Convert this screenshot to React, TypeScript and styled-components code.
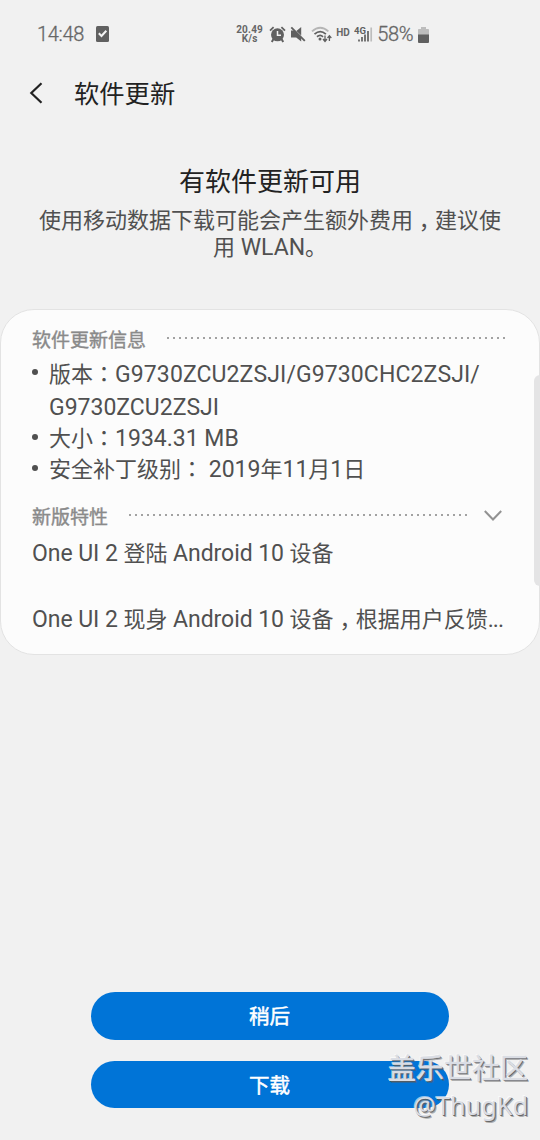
import React from 'react';
import styled, { createGlobalStyle } from 'styled-components';

const GlobalStyle = createGlobalStyle`
  * { box-sizing: border-box; }
  body {
    margin: 0;
    background: #f1f1f1;
    font-family: Roboto, 'Noto Sans CJK SC', sans-serif;
    color: #505050;
  }
`;

const Screen = styled.div`
  position: relative;
  display: flex;
  flex-direction: column;
  width: 540px;
  height: 1140px;
  overflow: hidden;
  background: #f1f1f1;
`;

const StatusBar = styled.div`
  display: flex;
  justify-content: space-between;
  align-items: center;
  height: 68px;
  padding: 0 111px 0 37px;
  color: #666;
  flex: none;
`;

const StatusGroup = styled.div<{ $gap: number }>`
  display: flex;
  align-items: center;
  gap: ${(p) => p.$gap}px;
`;

const StatusText = styled.span`
  font-size: 20px;
  font-weight: 300;
  line-height: 24px;
  letter-spacing: -0.3px;
  -webkit-text-stroke: 0.3px #666;
`;

const NetSpeed = styled.span`
  display: flex;
  flex-direction: column;
  align-items: center;
  margin-right: 1px;
  font-size: 10px;
  font-weight: 700;
  line-height: 9.5px;
  letter-spacing: 0.2px;
`;

const HdLabel = styled.span`
  font-size: 10px;
  font-weight: 700;
  line-height: 12px;
  margin: -2px -1px 0 -0.5px;
`;

const Header = styled.header`
  display: flex;
  align-items: center;
  height: 50px;
  padding-left: 28px;
  gap: 29px;
  color: #222;
  flex: none;
`;

const HeaderTitle = styled.h1`
  margin: 0;
  padding-top: 4px;
  font-size: 25.3px;
  font-weight: 400;
  line-height: 38px;
`;

const Intro = styled.section`
  padding: 45px 30px 0;
  height: 191px;
  text-align: center;
  flex: none;
`;

const IntroTitle = styled.h2`
  margin: 0;
  font-size: 26px;
  font-weight: 400;
  line-height: 38px;
  color: #222;
`;

const IntroText = styled.p`
  margin: 6px 0 0;
  font-size: 22px;
  line-height: 27px;
  white-space: nowrap;
`;

const Latin = styled.span<{ $spacing?: number }>`
  font-size: 23px;
  line-height: 0;
  letter-spacing: ${(p) => p.$spacing ?? 0}px;
`;

const Comma = styled.span`
  font-family: 'Noto Sans CJK TC', sans-serif;
  line-height: 0;
  vertical-align: -7px;
`;

const Colon = styled.span`
  font-family: 'Noto Sans CJK TC', sans-serif;
  line-height: 0;
`;

const Card = styled.section`
  height: 346px;
  padding: 15px 32px 0 31px;
  border: 1px solid #e3e3e3;
  border-radius: 34px;
  background: #fcfcfc;
  flex: none;
`;

const SectionHead = styled.div<{ $gap: number }>`
  display: flex;
  align-items: center;
  gap: ${(p) => p.$gap}px;
  height: 28px;
  color: #8a8a8a;
`;

const SectionTitle = styled.h3`
  margin: 0;
  padding-top: 3px;
  font-size: 19px;
  font-weight: 400;
  line-height: 28px;
  -webkit-text-stroke: 0.4px #8a8a8a;
`;

const Dots = styled.div`
  flex: 1;
  height: 2px;
  margin-top: -2px;
  margin-right: -1px;
  background: repeating-linear-gradient(90deg, #a2a2a2 0 2px, transparent 2px 6px);
`;

const InfoList = styled.ul`
  display: flex;
  flex-direction: column;
  height: 149px;
  margin: 0;
  padding: 5px 0 0;
  list-style: none;
  font-size: 22px;
`;

const InfoItem = styled.li<{ $line: number }>`
  position: relative;
  height: ${(p) => p.$line === 33 ? 65 : p.$line}px;
  padding-left: 17px;
  line-height: ${(p) => p.$line}px;
  white-space: nowrap;

  &::before {
    content: '';
    position: absolute;
    left: 0;
    top: 11px;
    width: 6px;
    height: 6px;
    border-radius: 50%;
    background: #505050;
  }
`;

const Feature = styled.p`
  margin: 0;
  padding-top: 7px;
  font-size: 22px;
  line-height: 33px;
  white-space: pre;
`;

const Actions = styled.div`
  display: flex;
  flex-direction: column;
  align-items: center;
  gap: 21px;
  margin-top: auto;
  padding-bottom: 32px;
`;

const Button = styled.button`
  width: 358px;
  height: 47.5px;
  margin-right: 1px;
  padding: 4px 0 0;
  border: 0;
  border-radius: 24px;
  background: #0074d7;
  color: #fff;
  font-family: inherit;
  font-size: 20.5px;
  font-weight: 400;
  line-height: 43.5px;
  -webkit-text-stroke: 0.5px #fff;
`;

const EdgeHandle = styled.div`
  position: absolute;
  right: -6px;
  top: 375px;
  width: 12px;
  height: 211px;
  border-radius: 6px;
  background: #e4e4e5;
`;

const Watermark = styled.div`
  position: absolute;
  right: 12px;
  bottom: 18px;
  display: flex;
  flex-direction: column;
  align-items: flex-end;
  color: rgb(218, 221, 228);
  text-shadow: 1px 1px 0 rgba(90, 90, 90, 0.85), 2px 2px 0 rgba(90, 90, 90, 0.45), -1px -1px 0 rgba(255, 255, 255, 0.6);
`;

const WatermarkName = styled.span`
  font-size: 28px;
  font-weight: 400;
  line-height: 36px;
  -webkit-text-stroke: 0.4px rgb(218, 221, 228);
`;

const WatermarkUser = styled.span`
  font-family: 'Noto Sans', sans-serif;
  font-size: 25.3px;
  line-height: 34px;
`;

const TaskIcon = () => (
  <svg width="13" height="16" viewBox="0 0 13 16">
    <rect width="13" height="16" rx="1.5" fill="#606060" />
    <path d="M2.8 7.2 5.5 10 10.3 4.8" fill="none" stroke="#f4f4f4" strokeWidth="2" />
  </svg>
);

const AlarmIcon = () => (
  <svg width="17" height="17" viewBox="0 0 17 17">
    <path d="M1 4.6 4.6 1.2M16 4.6 12.4 1.2" stroke="#606060" strokeWidth="1.8" />
    <path d="M4.6 12.8 2.8 16M12.4 12.8 14.2 16" stroke="#606060" strokeWidth="2" />
    <circle cx="8.5" cy="8.8" r="6.5" fill="#606060" />
    <path d="M8.5 5V9.2H12" fill="none" stroke="#f1f1f1" strokeWidth="1.5" />
  </svg>
);

const MuteIcon = () => (
  <svg width="16" height="16" viewBox="0 0 16 16">
    <path d="M1 4.5H4.5L11.2 11V15.5L6.2 11.5H1ZM6.4 5 11.2 1V9.6Z" fill="#606060" />
    <path d="M1.3 1.3 14.8 14.8" stroke="#606060" strokeWidth="1.9" />
  </svg>
);

const WifiIcon = () => (
  <svg width="21" height="17" viewBox="0 0 21 17">
    <g fill="none" strokeWidth="1.8">
      <path d="M1 5.4Q9.2-2 17.4 5.4" stroke="#b5b5b5" />
      <path d="M3.5 8.2Q9.2 3 14.9 8.2" stroke="#606060" />
      <path d="M6 10.8Q9.2 8 12 10.8" stroke="#606060" />
    </g>
    <circle cx="9" cy="13" r="1.5" fill="#606060" />
    <path d="M14 9.5V15M12 13 14 15.4 16 13M18.4 15V10M16.5 12 18.4 9.8 20.3 12" fill="none" stroke="#606060" strokeWidth="1.3" />
  </svg>
);

const SignalIcon = () => (
  <svg width="19" height="17" viewBox="0 0 19 17">
    <text x="0" y="8" fontFamily="Roboto, sans-serif" fontSize="9.5" fontWeight="700" fill="#606060">4G</text>
    <path d="M5 13.4V15.5M8 11V15.5M11 8.6V15.5M14 5V15.5" stroke="#606060" strokeWidth="1.7" />
    <path d="M17.2 1.5V15.5" stroke="#bdbdbd" strokeWidth="1.7" />
  </svg>
);

const BatteryIcon = () => (
  <svg width="11" height="17" viewBox="0 0 11 17">
    <path d="M3 1h5v2h2.2a.8.8 0 0 1 .8.8V9H0V3.8A.8.8 0 0 1 .8 3H3Z" fill="#bdbdbd" />
    <path d="M0 8.5H11V16a1 1 0 0 1-1 1H1a1 1 0 0 1-1-1Z" fill="#606060" />
  </svg>
);

const BackIcon = () => (
  <svg width="17" height="22" viewBox="0 0 17 22">
    <path d="M13.5 1.2 3.3 11 13.5 20.8" fill="none" stroke="#222" strokeWidth="2.2" />
  </svg>
);

const ChevronIcon = () => (
  <svg width="18" height="12" viewBox="0 0 18 12">
    <path d="M.8 1 9 9.5 17.2 1" fill="none" stroke="#929292" strokeWidth="2" />
  </svg>
);

const ChevronSlot = styled.span`
  display: flex;
  margin: -1px 5px 0 -5px;
`;

export default function App() {
  return (
    <>
      <GlobalStyle />
      <Screen>
        <StatusBar>
          <StatusGroup $gap={12}>
            <StatusText>14:48</StatusText>
            <TaskIcon />
          </StatusGroup>
          <StatusGroup $gap={4.7}>
            <NetSpeed>
              <span>20.49</span>
              <span>K/s</span>
            </NetSpeed>
            <AlarmIcon />
            <MuteIcon />
            <WifiIcon />
            <HdLabel>HD</HdLabel>
            <SignalIcon />
            <StatusText>58%</StatusText>
            <BatteryIcon />
          </StatusGroup>
        </StatusBar>

        <Header>
          <BackIcon />
          <HeaderTitle>软件更新</HeaderTitle>
        </Header>

        <Intro>
          <IntroTitle>有软件更新可用</IntroTitle>
          <IntroText>
            使用移动数据下载可能会产生额外费用<Comma>，</Comma>建议使
            <br />用<Latin> WLAN</Latin>。
          </IntroText>
        </Intro>

        <Card>
          <SectionHead $gap={21}>
            <SectionTitle>软件更新信息</SectionTitle>
            <Dots />
          </SectionHead>
          <InfoList>
            <InfoItem $line={33}>
              版本<Colon>：</Colon>
              <Latin $spacing={0.1}>G9730ZCU2ZSJI/G9730CHC2ZSJI/</Latin>
              <br />
              <Latin>G9730ZCU2ZSJI</Latin>
            </InfoItem>
            <InfoItem $line={31}>
              大小<Colon>：</Colon>
              <Latin>1934.31 MB</Latin>
            </InfoItem>
            <InfoItem $line={31}>
              安全补丁级别<Colon>：</Colon>
              <Latin> 2019</Latin>年<Latin>11</Latin>月<Latin>1</Latin>日
            </InfoItem>
          </InfoList>
          <SectionHead $gap={21}>
            <SectionTitle>新版特性</SectionTitle>
            <Dots />
            <ChevronSlot>
              <ChevronIcon />
            </ChevronSlot>
          </SectionHead>
          <Feature>
            <Latin $spacing={-0.06}>One UI 2 </Latin>登陆<Latin $spacing={-0.06}> Android 10 </Latin>设备
            <br />
            <br />
            <Latin $spacing={-0.06}>One UI 2 </Latin>现身<Latin $spacing={-0.06}> Android 10 </Latin>设备<Comma>，</Comma>根据用户反馈<Latin $spacing={-0.9}>...</Latin>
          </Feature>
        </Card>

        <Actions>
          <Button>稍后</Button>
          <Button>下载</Button>
        </Actions>

        <EdgeHandle />
        <Watermark>
          <WatermarkName>盖乐世社区</WatermarkName>
          <WatermarkUser>@ThugKd</WatermarkUser>
        </Watermark>
      </Screen>
    </>
  );
}
